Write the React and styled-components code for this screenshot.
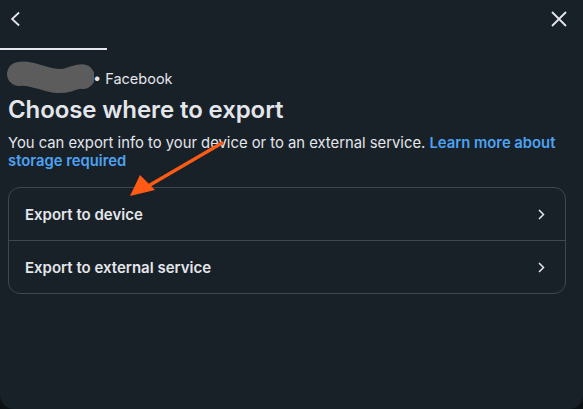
import styled, { createGlobalStyle } from "styled-components";

const GlobalStyle = createGlobalStyle`
  html, body {
    margin: 0;
    padding: 0;
    background: #0c1114;
  }
  body {
    font-family: Inter, "Noto Sans", sans-serif;
  }
`;

const ChevronLeft = ({ size = 16 }) => (
  <svg width={size * 0.7} height={size} viewBox="0 0 11 16" fill="none">
    <path d="M9 1.5L2 8l7 6.5" stroke="#e4e6eb" strokeWidth="1.8" />
  </svg>
);

const CloseIcon = () => (
  <svg width="16" height="16" viewBox="0 0 16 16" fill="none">
    <path d="M1 1l14 14M15 1L1 15" stroke="#e4e6eb" strokeWidth="1.8" />
  </svg>
);

const ChevronRight = () => (
  <svg width="7" height="11" viewBox="0 0 7 11" fill="none">
    <path d="M1 1l4.5 4.5L1 10" stroke="#e4e6eb" strokeWidth="1.5" />
  </svg>
);

const Scribble = () => (
  <svg width="88" height="34" viewBox="0 0 88 34">
    <path
      d="M13 13 C 28 10, 44 24, 62 19 C 71 16, 76 14, 77 16"
      stroke="#5c5c5c"
      strokeWidth="24"
      strokeLinecap="round"
      fill="none"
    />
  </svg>
);

const Arrow = () => (
  <ArrowSvg width="100" height="60" viewBox="0 0 100 60">
    <path d="M92 3 L20 45" stroke="#ff5b14" strokeWidth="3.2" strokeLinecap="round" />
    <path d="M0 56 L10 35 L25 50 Z" fill="#ff5b14" />
  </ArrowSvg>
);

const options = ["Export to device", "Export to external service"];

export default function App() {
  return (
    <>
      <GlobalStyle />
      <Dialog>
        <TopBar>
          <IconButton>
            <ChevronLeft />
          </IconButton>
          <IconButton>
            <CloseIcon />
          </IconButton>
        </TopBar>
        <TabLine />
        <Content>
          <Account>
            <Scribble />
            <span>• Facebook</span>
          </Account>
          <Title>Choose where to export</Title>
          <Description>
            You can export info to your device or to an external service.{" "}
            <Link>Learn more about storage required</Link>
          </Description>
          <OptionList>
            {options.map((label) => (
              <OptionRow key={label}>
                <span>{label}</span>
                <ChevronRight />
              </OptionRow>
            ))}
          </OptionList>
        </Content>
        <Arrow />
      </Dialog>
    </>
  );
}

const Dialog = styled.div`
  position: relative;
  width: 583px;
  height: 409px;
  background: #182128;
  border-radius: 0 0 14px 14px;
  overflow: hidden;
`;

const TopBar = styled.div`
  display: flex;
  justify-content: space-between;
  align-items: center;
  height: 38px;
  padding: 0 16px 0 10px;
`;

const IconButton = styled.div`
  display: flex;
  align-items: center;
  justify-content: center;
  cursor: pointer;
`;

const TabLine = styled.div`
  width: 107px;
  height: 2px;
  margin-top: 10px;
  background: #e4e6eb;
`;

const Content = styled.div`
  padding: 0 17px 0 8px;
  color: #e4e6eb;
`;

const Account = styled.div`
  display: flex;
  align-items: center;
  height: 34px;
  margin-top: 11px;
  font-size: 14.5px;
  color: #e4e6eb;

  svg {
    margin: 0 -1px 0 -2px;
  }
`;

const Title = styled.h1`
  margin: 0;
  font-size: 24px;
  line-height: 30px;
  font-weight: 600;
  color: #e4e6eb;
  letter-spacing: -0.1px;
`;

const Description = styled.p`
  margin: 9px 0 0;
  font-size: 14.8px;
  line-height: 18px;
  color: #e4e6eb;
`;

const Link = styled.a`
  color: #4ca3f2;
  font-weight: 600;
  cursor: pointer;
`;

const OptionList = styled.div`
  margin-top: 17px;
  border: 1px solid #3b4955;
  border-radius: 12px;
  overflow: hidden;
`;

const OptionRow = styled.div`
  display: flex;
  align-items: center;
  justify-content: space-between;
  height: 52px;
  padding: 0 20px 0 16px;
  font-size: 15px;
  font-weight: 600;
  color: #e4e6eb;
  cursor: pointer;

  & + & {
    border-top: 1px solid #3b4955;
  }
`;

const ArrowSvg = styled.svg`
  position: absolute;
  left: 130px;
  top: 140px;
`;
